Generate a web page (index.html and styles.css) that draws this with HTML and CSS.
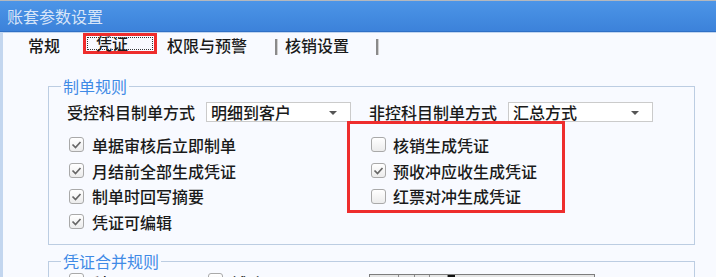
FILE: index.html
```html
<!DOCTYPE html>
<html lang="zh-CN">
<head>
  <meta charset="UTF-8" />
  <title>账套参数设置</title>
  <link rel="stylesheet" href="styles.css">
</head>
<body>
  <div class="titlebar">账套参数设置</div>

  <div class="window">
    <div class="tabs">
      <span class="tab tab-first">常规</span>
      <span class="tab tab-active">凭证</span>
      <span class="tab tab-third">权限与预警</span>
      <span class="tab-sep sep-a"></span>
      <span class="tab tab-fourth">核销设置</span>
      <span class="tab-sep sep-b"></span>
    </div>

    <fieldset class="group group-rules">
      <legend>制单规则</legend>

      <div class="select-row">
        <span class="label">受控科目制单方式</span>
        <div class="combo"><span>明细到客户</span><i class="arrow"></i></div>
        <span class="label label-second">非控科目制单方式</span>
        <div class="combo"><span>汇总方式</span><i class="arrow"></i></div>
      </div>

      <div class="checks">
        <div class="check-col check-col-left">
          <label class="check"><span class="box on"></span>单据审核后立即制单</label>
          <label class="check"><span class="box on"></span>月结前全部生成凭证</label>
          <label class="check"><span class="box on"></span>制单时回写摘要</label>
          <label class="check"><span class="box on"></span>凭证可编辑</label>
        </div>
        <div class="check-col check-col-right marked">
          <label class="check"><span class="box"></span>核销生成凭证</label>
          <label class="check"><span class="box on"></span>预收冲应收生成凭证</label>
          <label class="check"><span class="box"></span>红票对冲生成凭证</label>
        </div>
      </div>
    </fieldset>

    <fieldset class="group group-merge">
      <legend>凭证合并规则</legend>
      <div class="merge-row">
        <label class="check check-first"><span class="box"></span>科目</label>
        <label class="check check-second"><span class="box"></span>辅助项</label>
        <div class="grid-box">
          <span class="cell c1"></span>
          <span class="cell c2"></span>
          <span class="cell c3"></span>
          <span class="cell c4"></span>
        </div>
      </div>
    </fieldset>
  </div>
</body>
</html>
```

FILE: styles.css
```css
body {
  margin: 0;
  width: 716px;
  height: 277px;
  overflow: hidden;
  background: #f8faff;
  font-family: "Noto Sans CJK SC", sans-serif;
  font-size: 16px;
  font-weight: 500;
  color: #1a1a1a;
}

.titlebar {
  height: 30px;
  line-height: 30px;
  padding-left: 7px;
  border-top: 1px solid #b4b8bd;
  border-bottom: 1px solid #2f70c6;
  background: linear-gradient(#4c95e7, #3c82da);
  color: rgba(235, 242, 252, 0.9);
  font-size: 16px;
  font-weight: 400;
}

.window {
  border-left: 3px solid #c3d6ef;
  border-top: 1px solid #c2d6f0;
  height: 260px;
}

/* tabs */
.tabs {
  display: flex;
  align-items: center;
  height: 23px;
  padding-left: 25px;
  line-height: 20px;
}

.tab {
  white-space: nowrap;
}

.tab-active {
  box-sizing: border-box;
  width: 74px;
  height: 21px;
  margin-left: 23px;
  padding-left: 10px;
  border: 3px solid #ee2d2d;
  outline: 1px dotted #333;
  outline-offset: -5px;
  line-height: 14px;
  align-self: flex-start;
}

.tab-third {
  margin-left: 10px;
}

.tab-sep {
  width: 2px;
  height: 16px;
  background: #8a8a8a;
  border-right: 1px solid #d0d0d0;
  margin-top: 4px;
}

.sep-a {
  margin-left: 28px;
}

.tab-fourth {
  margin-left: 7px;
}

.sep-b {
  margin-left: 27px;
}

/* groups */
.group {
  box-sizing: border-box;
  width: 647px;
  margin: 0 0 0 45px;
  padding: 0 0 0 12px;
  border: 1px solid #bccde2;
  min-width: 0;
}

.group legend {
  padding: 0 2px;
  line-height: 20px;
  color: #3f8ae6;
  font-weight: 400;
}

.group-rules {
  margin-top: 20px;
  height: 169px;
}

.group-merge {
  margin-top: 6px;
  height: 80px;
}

.select-row {
  display: flex;
  align-items: center;
  margin-top: 6px;
  padding-left: 6px;
  line-height: 20px;
}

.label {
  width: 128px;
  white-space: nowrap;
}

.label-second {
  margin-left: 18px;
}

.combo {
  position: relative;
  box-sizing: border-box;
  width: 145px;
  height: 20px;
  margin-left: 11px;
  padding-left: 4px;
  border: 1px solid #cbcbcb;
  background: #fff;
  line-height: 18px;
}

.arrow {
  position: absolute;
  right: 13px;
  top: 8px;
  border-left: 4px solid transparent;
  border-right: 4px solid transparent;
  border-top: 4px solid #555;
}

.checks {
  display: flex;
  margin-top: 10px;
  padding-left: 8px;
}

.check-col {
  display: flex;
  flex-direction: column;
}

.check-col-left {
  width: 302px;
}

.check-col-right {
  position: relative;
}

.check {
  display: flex;
  align-items: center;
  height: 25.7px;
  white-space: nowrap;
}

.check-col-right .box {
  margin-right: 7px;
}

.box {
  box-sizing: border-box;
  width: 15px;
  height: 15px;
  margin-right: 8px;
  border: 1px solid #a9a9a9;
  border-radius: 3px;
  background: linear-gradient(#ffffff, #ececec);
}

.box.on {
  background: url("data:image/svg+xml,%3Csvg xmlns='http://www.w3.org/2000/svg' width='13' height='13'%3E%3Cpolyline points='2.5,6.5 5.5,9.5 10.5,4' fill='none' stroke='%23666' stroke-width='1.7'/%3E%3C/svg%3E") center no-repeat, linear-gradient(#ffffff, #ececec);
}

/* red annotation around the right column */
.marked::after {
  content: "";
  position: absolute;
  left: -24px;
  top: -11px;
  width: 218px;
  height: 92px;
  box-sizing: border-box;
  border: 3px solid #ee2d2d;
}

.merge-row {
  display: flex;
  align-items: flex-start;
  margin-top: 2px;
  padding-left: 8px;
}

.merge-row .check {
  height: auto;
  line-height: 20px;
  align-items: flex-start;
}

.check-first {
  width: 139px;
}

.check-second {
  width: 161px;
}

.grid-box {
  position: relative;
  box-sizing: border-box;
  width: 226px;
  height: 40px;
  margin-top: 1px;
  border: 1px solid #7d7d7d;
  background: #e6e6e6;
}

.cell {
  position: absolute;
  top: 0;
  height: 20px;
  border-left: 1px solid #8a8a8a;
}

.c1 { left: 28px; }
.c2 { left: 44px; }
.c3 { left: 59px; }
.c4 { left: 77px; width: 7px; background: #111; }
```
